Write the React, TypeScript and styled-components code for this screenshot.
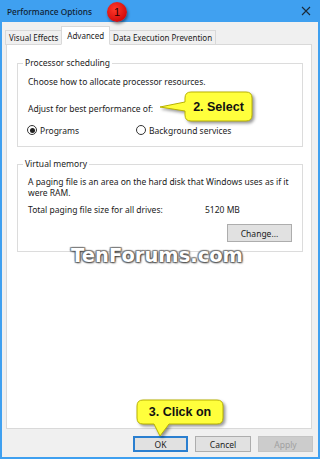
import React from 'react';
import styled, { createGlobalStyle } from 'styled-components';

const Global = createGlobalStyle`
  html, body { margin: 0; padding: 0; background: #ffffff; }
  body { font-family: "Noto Sans", "Open Sans", sans-serif; }
  * { box-sizing: border-box; }
`;

const Window = styled.div`
  position: relative;
  width: 320px;
  height: 459px;
  display: flex;
  flex-direction: column;
  font-size: 8.5px;
  color: #1b1b1b;
  overflow: hidden;
`;

const TitleBar = styled.div`
  height: 22px;
  flex: none;
  background: #3fa0f0;
  display: flex;
  align-items: center;
  justify-content: space-between;
  padding: 0 9px 0 7px;
  font-size: 8.3px;
  font-weight: 500;
  color: #102030;
`;

const Body = styled.div`
  flex: 1;
  display: flex;
  flex-direction: column;
  background: #f0f0f0;
  border: 2px solid #3fa0f0;
  border-top: none;
  padding: 0 6px 0 4px;
`;

const TabStrip = styled.div`
  height: 22px;
  display: flex;
  align-items: flex-end;
  margin-left: -1px;
  position: relative;
  z-index: 1;
`;

const Tab = styled.div<{ $active?: boolean }>`
  height: ${p => (p.$active ? 19 : 15)}px;
  display: flex;
  align-items: center;
  padding: 0 ${p => (p.$active ? 5 : 3)}px;
  margin: 0 ${p => (p.$active ? -1 : 0)}px -1px;
  font-size: 8px;
  background: ${p => (p.$active ? '#ffffff' : '#f0f0f0')};
  border: 1px solid #d9d9d9;
  border-bottom: ${p => (p.$active ? '1px solid #ffffff' : '1px solid #d9d9d9')};
  position: relative;
  z-index: ${p => (p.$active ? 2 : 1)};
  white-space: nowrap;
`;

const Panel = styled.div`
  height: 385px;
  flex: none;
  background: #ffffff;
  border: 1px solid #d9d9d9;
  padding: 0 8px 0 10px;
  display: flex;
  flex-direction: column;
`;

const Group = styled.fieldset<{ $top: number; $bottom: number }>`
  margin: ${p => p.$top}px 0 0 0;
  padding: 0 10px ${p => p.$bottom}px 10px;
  border: 1px solid #dcdcdc;
  min-width: 0;
  display: flex;
  flex-direction: column;
`;

const Legend = styled.legend`
  padding: 0 2px;
  margin-left: -5px;
  line-height: 12px;
  font-size: 8.5px;
`;

const Line = styled.div<{ $mt: number; $lh?: number }>`
  margin-top: ${p => p.$mt}px;
  line-height: ${p => p.$lh ?? 12}px;
  white-space: nowrap;
`;

const Para = styled.div`
  margin-top: 6px;
  line-height: 11px;
  white-space: nowrap;
`;

const RadioRow = styled.div`
  margin-top: 9px;
  height: 12px;
  display: flex;
  align-items: center;
`;

const RadioOption = styled.label<{ $width?: number }>`
  display: flex;
  align-items: center;
  gap: 3px;
  width: ${p => (p.$width ? `${p.$width}px` : 'auto')};
  flex: none;
  margin-left: -1px;
`;

const RadioCircle = styled.span<{ $checked?: boolean }>`
  width: 10px;
  height: 10px;
  border-radius: 50%;
  border: 1px solid #333333;
  background: #ffffff;
  display: flex;
  align-items: center;
  justify-content: center;
  &::after {
    content: '';
    width: 5px;
    height: 5px;
    border-radius: 50%;
    background: ${p => (p.$checked ? '#222222' : 'transparent')};
  }
`;

const TotalRow = styled.div`
  margin-top: 6px;
  line-height: 12px;
  display: flex;
`;

const TotalLabel = styled.span`
  width: 177px;
  flex: none;
`;

const ChangeRow = styled.div`
  margin-top: 8px;
  display: flex;
  justify-content: flex-end;
`;

const Button = styled.div<{ $w: number; $h: number; $variant?: 'default' | 'normal' | 'disabled' }>`
  width: ${p => p.$w}px;
  height: ${p => p.$h}px;
  display: flex;
  align-items: center;
  justify-content: center;
  font-size: 8.5px;
  background: ${p => (p.$variant === 'disabled' ? '#cccccc' : '#e1e1e1')};
  color: ${p => (p.$variant === 'disabled' ? '#a0a0a0' : '#1b1b1b')};
  border: ${p =>
    p.$variant === 'default'
      ? '2px solid #2a7fd0'
      : p.$variant === 'disabled'
      ? '1px solid #c4c4c4'
      : '1px solid #adadad'};
`;

const ButtonRow = styled.div`
  display: flex;
  justify-content: flex-end;
  gap: 7px;
  margin-top: 7px;
  margin-right: -1px;
`;

const Badge = styled.div`
  position: absolute;
  left: 107px;
  top: 2px;
  width: 20px;
  height: 20px;
  border-radius: 50%;
  background: radial-gradient(circle at 40% 35%, #ff3a2a, #d40c0c 70%);
  box-shadow: 1px 2px 3px rgba(0, 0, 0, 0.45);
  display: flex;
  align-items: center;
  justify-content: center;
  font-family: "Liberation Sans", Arial, sans-serif;
  font-size: 11px;
  color: #2a0000;
`;

const Callout = styled.div<{ $x: number; $y: number; $w: number; $h: number }>`
  position: absolute;
  left: ${p => p.$x}px;
  top: ${p => p.$y}px;
  width: ${p => p.$w}px;
  height: ${p => p.$h}px;
  display: flex;
  align-items: center;
  justify-content: center;
  & > svg {
    position: absolute;
    left: 0;
    top: 0;
    overflow: visible;
    filter: drop-shadow(2px 2px 1.5px rgba(0, 0, 0, 0.4));
  }
`;

const CalloutText = styled.span`
  position: relative;
  font-family: "Liberation Sans", Arial, sans-serif;
  font-weight: bold;
  font-size: 12.5px;
  color: #111111;
  white-space: nowrap;
`;

const Watermark = styled.div`
  position: absolute;
  left: 0;
  right: 0;
  top: 244px;
  text-align: center;
  padding-right: 6px;
  font-family: "DejaVu Sans", sans-serif;
  font-weight: bold;
  font-size: 19.5px;
  color: #ffffff;
  text-shadow: 0 0 1px #555, 1px 1px 2px #444, -1px -1px 1px #888, 1px -1px 1px #888, -1px 1px 1px #888;
`;

const CloseIcon = () => (
  <svg width="10" height="10" viewBox="0 0 10 10">
    <path d="M1 1 L9 9 M9 1 L1 9" stroke="#1c2b3a" strokeWidth="1.1" />
  </svg>
);

export default function App() {
  return (
    <>
      <Global />
      <Window>
        <TitleBar>
          <span>Performance Options</span>
          <CloseIcon />
        </TitleBar>
        <Body>
          <TabStrip>
            <Tab>Visual Effects</Tab>
            <Tab $active>Advanced</Tab>
            <Tab>Data Execution Prevention</Tab>
          </TabStrip>
          <Panel>
            <Group $top={12} $bottom={10}>
              <Legend>Processor scheduling</Legend>
              <Line $mt={7}>Choose how to allocate processor resources.</Line>
              <Line $mt={15}>Adjust for best performance of:</Line>
              <RadioRow>
                <RadioOption $width={110}>
                  <RadioCircle $checked />
                  Programs
                </RadioOption>
                <RadioOption>
                  <RadioCircle />
                  Background services
                </RadioOption>
              </RadioRow>
            </Group>
            <Group $top={11} $bottom={9}>
              <Legend>Virtual memory</Legend>
              <Para>
                A paging file is an area on the hard disk that Windows uses as if it
                <br />
                were RAM.
              </Para>
              <TotalRow>
                <TotalLabel>Total paging file size for all drives:</TotalLabel>
                <span>5120 MB</span>
              </TotalRow>
              <ChangeRow>
                <Button $w={65} $h={18}>Change...</Button>
              </ChangeRow>
            </Group>
          </Panel>
          <ButtonRow>
            <Button $w={55} $h={16} $variant="default">OK</Button>
            <Button $w={56} $h={16}>Cancel</Button>
            <Button $w={55} $h={16} $variant="disabled">Apply</Button>
          </ButtonRow>
        </Body>

        <Badge>1</Badge>
        <Watermark>TenForums.com</Watermark>

        <Callout $x={185} $y={92} $w={67} $h={29}>
          <svg width="67" height="29">
            <path
              d="M6,0 H61 Q67,0 67,6 V23 Q67,29 61,29 H6 Q0,29 0,23 V19 L-25,15 L0,10 V6 Q0,0 6,0 Z"
              fill="#ffff3c"
              stroke="#b9b200"
              strokeWidth="1"
            />
          </svg>
          <CalloutText>2. Select</CalloutText>
        </Callout>

        <Callout $x={137} $y={400} $w={86} $h={24}>
          <svg width="86" height="24">
            <path
              d="M6,0 H80 Q86,0 86,6 V18 Q86,24 80,24 H32 L23,36 L17,24 H6 Q0,24 0,18 V6 Q0,0 6,0 Z"
              fill="#ffff3c"
              stroke="#b9b200"
              strokeWidth="1"
            />
          </svg>
          <CalloutText>3. Click on</CalloutText>
        </Callout>
      </Window>
    </>
  );
}
